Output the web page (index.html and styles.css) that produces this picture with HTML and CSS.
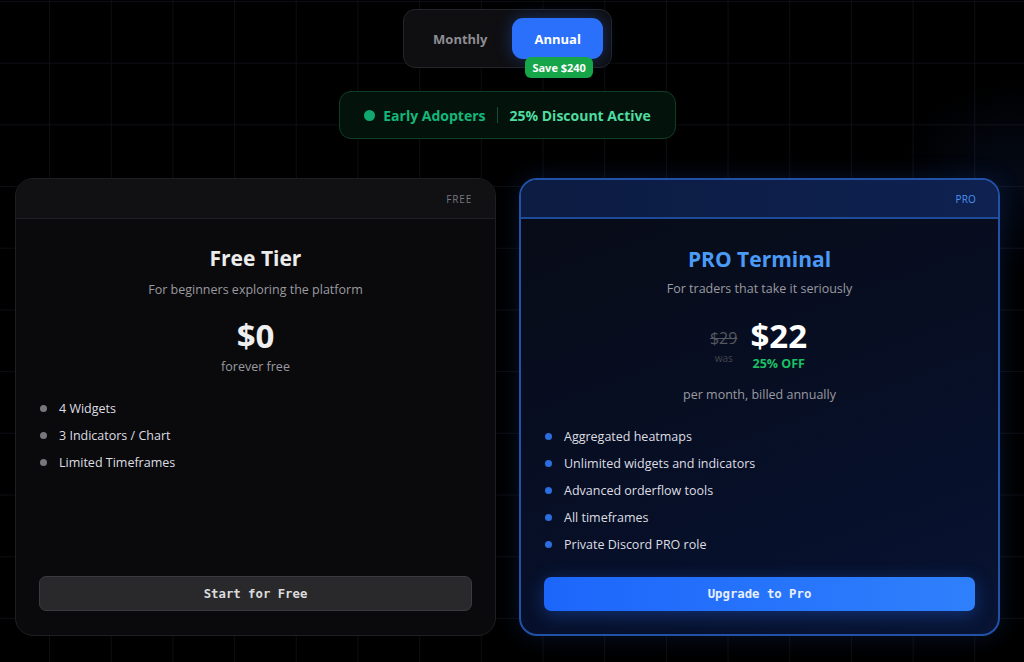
FILE: index.html
```html
<!DOCTYPE html>
<html lang="en">
<head>
    <meta charset="UTF-8">
    <meta name="viewport" content="width=device-width, initial-scale=1.0">
    <title>Pricing</title>

    <link rel="stylesheet" href="styles.css">
</head>
<body>

    <div class="page">

        <div class="billing">
            <div class="toggle">
                <button class="toggle-btn">Monthly</button>
                <button class="toggle-btn active">Annual</button>
                <span class="save">Save $240</span>
            </div>
        </div>

        <div class="promo">
            <span class="promo-dot"></span>
            <span class="promo-name">Early Adopters</span>
            <span class="promo-sep"></span>
            <span class="promo-deal">25% Discount Active</span>
        </div>

        <div class="plans">

            <div class="card">
                <div class="card-head"><span class="tag">FREE</span></div>
                <div class="card-body">
                    <h2 class="title">Free Tier</h2>
                    <p class="subtitle">For beginners exploring the platform</p>
                    <div class="price">$0</div>
                    <p class="period">forever free</p>
                    <ul class="features">
                        <li>4 Widgets</li>
                        <li>3 Indicators / Chart</li>
                        <li>Limited Timeframes</li>
                    </ul>
                    <button class="cta">Start for Free</button>
                </div>
            </div>

            <div class="card pro">
                <div class="card-head"><span class="tag">PRO</span></div>
                <div class="card-body">
                    <h2 class="title">PRO Terminal</h2>
                    <p class="subtitle">For traders that take it seriously</p>
                    <div class="price-row">
                        <div class="old">
                            <span class="old-price">$29</span>
                            <span class="was">was</span>
                        </div>
                        <div class="new">
                            <span class="price">$22</span>
                            <span class="off">25% OFF</span>
                        </div>
                    </div>
                    <p class="period billed">per month, billed annually</p>
                    <ul class="features">
                        <li>Aggregated heatmaps</li>
                        <li>Unlimited widgets and indicators</li>
                        <li>Advanced orderflow tools</li>
                        <li>All timeframes</li>
                        <li>Private Discord PRO role</li>
                    </ul>
                    <button class="cta">Upgrade to Pro</button>
                </div>
            </div>

        </div>
    </div>

</body>
</html>
```

FILE: styles.css
```css
* {
    box-sizing: border-box;
}
body {
    margin: 0;
    height: 662px;
    overflow: hidden;
    font-family: "Open Sans", "Noto Sans", sans-serif;
    color: #e6e6e6;
    background-color: #000;
    background-image:
        radial-gradient(ellipse 160px 140px at 1010px 180px, rgba(30, 70, 160, 0.14), transparent 70%),
        linear-gradient(to right, #0d0e13 1px, transparent 1px),
        linear-gradient(to bottom, #0d0e13 1px, transparent 1px);
    background-size: auto, 61.7px 61.7px, 61.7px 61.7px;
    background-position: 0 0, 49px 0, 0 1px;
}
.page {
    padding: 9px 24px 0 15px;
}

/* billing switch */
.billing {
    display: flex;
    justify-content: center;
}
.toggle {
    position: relative;
    display: flex;
    gap: 4px;
    padding: 8px;
    background: #0f0f12;
    border: 1px solid #24242a;
    border-radius: 12px;
}
.toggle-btn {
    height: 41px;
    padding: 0 21px;
    border: none;
    border-radius: 11px;
    background: transparent;
    color: #8d8d93;
    font-family: "Open Sans", sans-serif;
    font-size: 13px;
    font-weight: 700;
}
.toggle-btn.active {
    padding: 0 22px;
    background: #2a70fb;
    color: #fff;
    box-shadow: 0 0 16px rgba(42, 112, 251, 0.35);
}
.save {
    position: absolute;
    right: 18px;
    top: 47px;
    padding: 3px 7px;
    background: #16a548;
    color: #fff;
    font-size: 11px;
    font-weight: 700;
    border-radius: 6px;
    line-height: 15px;
}

/* early adopter banner */
.promo {
    width: 337px;
    height: 48px;
    margin: 23px auto 0;
    display: flex;
    align-items: center;
    justify-content: center;
    background: #03130c;
    border: 1px solid #0f3d27;
    border-radius: 12px;
    font-size: 14px;
    font-weight: 700;
}
.promo-dot {
    width: 11px;
    height: 11px;
    border-radius: 50%;
    background: #10a86e;
    margin-right: 8px;
}
.promo-name {
    color: #14b87a;
}
.promo-sep {
    width: 1px;
    height: 16px;
    margin: 0 11px 0 12px;
    background: #1d4a36;
}
.promo-deal {
    color: #4fdca0;
}

/* plan cards */
.plans {
    display: grid;
    grid-template-columns: 1fr 1fr;
    gap: 23px;
    margin-top: 39px;
}
.card {
    height: 458px;
    display: flex;
    flex-direction: column;
    background: #0a0a0c;
    border: 1px solid #1f1f23;
    border-radius: 18px;
    overflow: hidden;
}
.card-head {
    height: 40px;
    flex-shrink: 0;
    display: flex;
    align-items: center;
    justify-content: flex-end;
    padding: 0 23px;
    background: #111114;
    border-bottom: 1px solid #1f1f24;
}
.tag {
    font-size: 10px;
    letter-spacing: 0.8px;
    color: #77777d;
}
.card-body {
    flex: 1;
    display: flex;
    flex-direction: column;
    padding: 25px 23px 24px;
    text-align: center;
}
.title {
    margin: 0;
    font-size: 21px;
    line-height: 28px;
    font-weight: 700;
    color: #ececec;
}
.subtitle {
    margin: 9px 0 0;
    font-size: 12.5px;
    line-height: 18px;
    color: #9a9aa0;
}
.price {
    margin-top: 17px;
    font-size: 33px;
    line-height: 40px;
    font-weight: 700;
    color: #efefef;
}
.period {
    margin: 2px 0 0;
    font-size: 12.5px;
    line-height: 18px;
    color: #9a9aa0;
}
.features {
    list-style: none;
    margin: 23px 0 0;
    padding: 0;
    text-align: left;
}
.features li {
    position: relative;
    padding-left: 20px;
    font-size: 12.5px;
    line-height: 20px;
    margin-bottom: 7px;
    color: #dedee2;
}
.features li::before {
    content: "";
    position: absolute;
    left: 1px;
    top: 6px;
    width: 7px;
    height: 7px;
    border-radius: 50%;
    background: #77777d;
}
.cta {
    margin-top: auto;
    height: 35px;
    width: 100%;
    border: 1px solid #3a3a3f;
    border-radius: 7px;
    background: #29292c;
    color: #dcdcdc;
    font-family: "DejaVu Sans Mono", "Liberation Mono", monospace;
    font-size: 12.3px;
    font-weight: 700;
    cursor: pointer;
}

/* pro card */
.card.pro {
    border: 2px solid #2152a8;
    background: linear-gradient(160deg, #080b15 0%, #07102a 70%, #081433 100%);
    box-shadow: 0 0 24px rgba(37, 99, 235, 0.18);
}
.pro .card-head {
    height: 39px;
    background: linear-gradient(90deg, #0c1c42, #0e2150);
    border-bottom: 2px solid #1d4b9a;
    padding-right: 22px;
}
.pro .tag {
    color: #4d92ef;
    letter-spacing: 0.2px;
}
.pro .card-body {
    padding-top: 26px;
    padding-bottom: 23px;
}
.pro .subtitle {
    margin-top: 7px;
}
.pro .title {
    color: #4a9af6;
}
.price-row {
    display: flex;
    justify-content: center;
    align-items: flex-start;
    gap: 13px;
    margin-top: 20px;
    padding-right: 2px;
}
.old {
    display: flex;
    flex-direction: column;
    align-items: center;
    padding-top: 10px;
}
.old-price {
    font-size: 16px;
    line-height: 20px;
    color: #55585f;
    text-decoration: line-through;
}
.was {
    font-size: 10px;
    line-height: 14px;
    margin-top: 3px;
    color: #44474d;
}
.new {
    display: flex;
    flex-direction: column;
    align-items: center;
}
.new .price {
    margin-top: 0;
    line-height: 36px;
    color: #fff;
}
.off {
    margin-top: 2px;
    font-size: 12.5px;
    line-height: 16px;
    font-weight: 700;
    color: #19c063;
}
.billed {
    margin-top: 14px;
}
.pro .features {
    margin-top: 23px;
}
.pro .features li::before {
    background: #2a6ee0;
}
.pro .cta {
    height: 34px;
    border: none;
    background: linear-gradient(90deg, #1d66fb, #2f80fc);
    color: #e8f0ff;
    box-shadow: 0 4px 18px rgba(37, 110, 250, 0.35);
}
```
